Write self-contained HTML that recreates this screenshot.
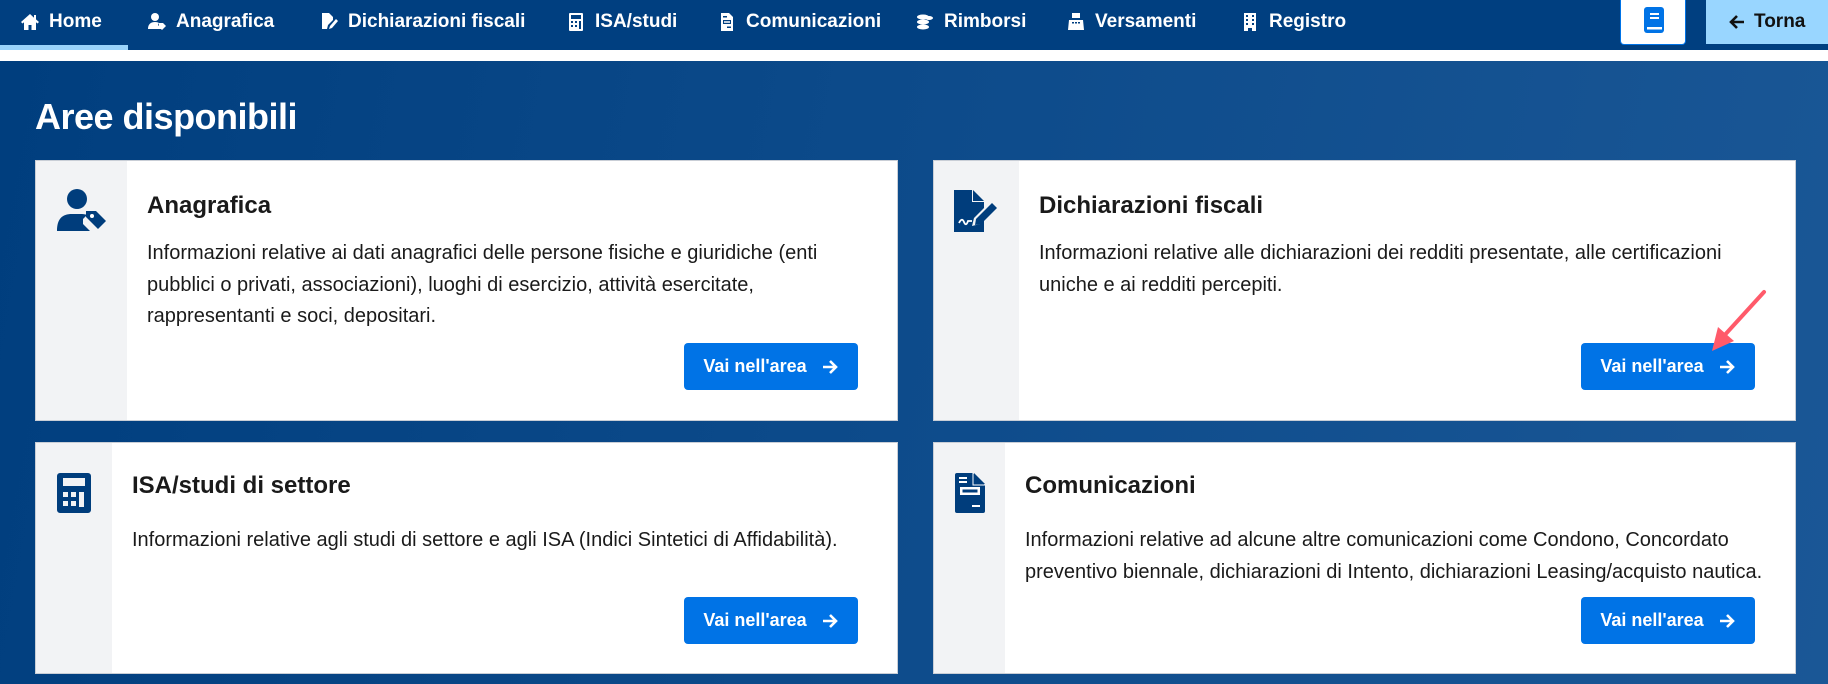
<!DOCTYPE html>
<html><head><meta charset="utf-8"><style>
*{margin:0;padding:0;box-sizing:border-box}
body{width:1828px;height:684px;overflow:hidden;font-family:"Liberation Sans",sans-serif;background:#fff;position:relative}
.nav{position:absolute;left:0;top:0;width:1828px;height:50px;background:#003f80}
.ni{position:absolute;top:11px;color:#fff;font-weight:bold;font-size:19px;white-space:nowrap;display:flex;align-items:center;gap:9px}
.ni svg{width:20px;height:20px;fill:#fff}
.ul{position:absolute;left:0;top:45px;width:128px;height:5px;background:#99d3fb}
.main{position:absolute;left:0;top:61px;width:1828px;height:623px;background:linear-gradient(100deg,#003e7e 0%,#0c4a8a 45%,#1a5796 100%)}
h1{position:absolute;left:35px;top:96px;color:#fff;font-size:36px;font-weight:bold;letter-spacing:-0.5px}
.card{position:absolute;background:#fff;border:1px solid #c9ced6}
.gc{position:absolute;left:0;top:0;bottom:0;background:#f2f3f5}
.card svg.ic{position:absolute;fill:#003d7c}
.t{position:absolute;font-size:24px;color:#1a1a1a;font-weight:bold}
.d{position:absolute;font-size:20px;line-height:31.5px;color:#1a1a1a;white-space:nowrap}
.btn{position:absolute;width:174px;height:47px;background:#0073e6;border-radius:4px;color:#fff;font-weight:bold;font-size:18px;display:flex;align-items:center;justify-content:center;gap:14px}
.btn svg{width:18px;height:18px}
</style></head><body>
<div class="nav">
<div class="ni" style="left:20px"><svg viewBox="0 0 20 20"><path d="M10 2L1 10l1.5 1.5L4 10.2V18h4.5v-5h3v5H16v-7.8l1.5 1.3L19 10l-3-2.6V3h-2v2.7z"/></svg>Home</div>
<div class="ni" style="left:147px"><svg viewBox="0 0 20 20"><circle cx="8" cy="5" r="4"/><path d="M1 17c0-5 3-7 7-7 2 0 3 .4 4 1l-1 2 4 4H1z"/><path d="M12 11h4l3 3-4 4-3-3z"/></svg>Anagrafica</div>
<div class="ni" style="left:319px"><svg viewBox="0 0 20 20"><path d="M3 1h7l4 4v3l-5 5-1 4H3z"/><path d="M11 14l6-7 2 2-6 7-3 1z"/></svg>Dichiarazioni fiscali</div>
<div class="ni" style="left:566px"><svg viewBox="0 0 20 20"><path d="M4 1h12a1 1 0 011 1v16a1 1 0 01-1 1H4a1 1 0 01-1-1V2a1 1 0 011-1zm1 2v4h10V3zm0 6v2h2V9zm4 0v2h2V9zm4 0v8h2V9zM5 13v2h2v-2zm4 0v2h2v-2z"/></svg>ISA/studi</div>
<div class="ni" style="left:717px"><svg viewBox="0 0 20 20"><path d="M4 1h8l4 4v14H4zm2 3v1.5h4V4zm0 4v4h8V8zm1 1.2h6v1.6H7zm3 5.3v1.5h4v-1.5z"/></svg>Comunicazioni</div>
<div class="ni" style="left:915px"><svg viewBox="0 0 20 20"><ellipse cx="8" cy="5" rx="6" ry="2.5"/><ellipse cx="8" cy="10" rx="6" ry="2.5"/><ellipse cx="8" cy="15" rx="6" ry="2.5"/><ellipse cx="14" cy="6" rx="4" ry="2"/></svg>Rimborsi</div>
<div class="ni" style="left:1066px"><svg viewBox="0 0 20 20"><path d="M6 1h8v5H6zM3 8h14l1 10H2zm3 2v1.5h2V10zm3 0v1.5h2V10zm3 0v1.5h2V10z"/></svg>Versamenti</div>
<div class="ni" style="left:1240px"><svg viewBox="0 0 20 20"><path d="M4 1h12v18h-4v-3H8v3H4zm2 2v2h2V3zm6 0v2h2V3zM6 7v2h2V7zm6 0v2h2V7zM6 11v2h2v-2zm6 0v2h2v-2z"/></svg>Registro</div>
<div style="position:absolute;left:1620px;top:0;width:66px;height:45px;background:#fff;border-radius:0 0 4px 4px;border:1px solid #0073e6;border-top:none"><svg viewBox="0 0 24 28" style="position:absolute;left:21px;top:6px;width:24px;height:28px"><rect x="2" y="1" width="20" height="26" rx="3" fill="#0073e6"/><rect x="8" y="7" width="9" height="2" fill="#fff"/><rect x="8" y="11" width="9" height="2" fill="#fff"/><rect x="5" y="21" width="15" height="2.5" fill="#fff"/></svg></div>
<div style="position:absolute;left:1706px;top:0;width:122px;height:44px;background:#99d6ff;color:#111;font-weight:bold;font-size:19px;display:flex;align-items:center;padding-left:22px;gap:8px"><svg viewBox="0 0 18 18" width="18" height="18"><path d="M16 9H3M9 3L3 9l6 6" stroke="#111" stroke-width="2.6" fill="none"/></svg>Torna</div>
<div class="ul"></div>
</div>
<div class="main"></div>
<h1>Aree disponibili</h1>

<div class="card" style="left:35px;top:160px;width:863px;height:261px">
<div class="gc" style="width:91px"></div>
<svg class="ic" viewBox="0 0 52 42" style="left:20px;top:28px;width:52px;height:42px"><circle cx="21" cy="10" r="10"/><path d="M1 42c0-12 5-17 15-17h10c2 0 4 .5 5 1l-4 4v5l7 7H1z"/><path d="M30 25h10l10 10-8 8-12-12z" transform="translate(0,-3)"/><circle cx="36" cy="27" r="2" fill="#fff"/></svg>
<div class="t" style="left:111px;top:31px">Anagrafica</div>
<div class="d" style="left:111px;top:77px">Informazioni relative ai dati anagrafici delle persone fisiche e giuridiche (enti<br>pubblici o privati, associazioni), luoghi di esercizio, attività esercitate,<br>rappresentanti e soci, depositari.</div>
<div class="btn" style="left:648px;top:182px">Vai nell'area <svg viewBox="0 0 18 18"><path d="M2 9h13M9 3l6 6-6 6" stroke="#fff" stroke-width="2.6" fill="none"/></svg></div>
</div>

<div class="card" style="left:933px;top:160px;width:863px;height:261px">
<div class="gc" style="width:85px"></div>
<svg class="ic" viewBox="0 0 46 42" style="left:20px;top:29px;width:46px;height:42px"><path d="M0 0h18v12h12v6L20 28l-2 8 8-2 4-4v12H0z"/><path d="M19 0l11 11H19z"/><path d="M22 29l16-16 5 5-16 16-6 1z"/><path d="M5 33q3-6 5-1t4-1h4" stroke="#fff" stroke-width="1.8" fill="none"/></svg>
<div class="t" style="left:105px;top:31px">Dichiarazioni fiscali</div>
<div class="d" style="left:105px;top:77px">Informazioni relative alle dichiarazioni dei redditi presentate, alle certificazioni<br>uniche e ai redditi percepiti.</div>
<div class="btn" style="left:647px;top:182px">Vai nell'area <svg viewBox="0 0 18 18"><path d="M2 9h13M9 3l6 6-6 6" stroke="#fff" stroke-width="2.6" fill="none"/></svg></div>
</div>

<div class="card" style="left:35px;top:442px;width:863px;height:232px">
<div class="gc" style="width:76px"></div>
<svg class="ic" viewBox="0 0 34 40" style="left:21px;top:30px;width:34px;height:40px"><path d="M3 0h28a3 3 0 013 3v34a3 3 0 01-3 3H3a3 3 0 01-3-3V3a3 3 0 013-3zm3 5v8h22V5zm0 14v5h5v-5zm8 0v5h5v-5zm8 0v15h5V19zM6 28v5h5v-5zm8 0v5h5v-5z"/></svg>
<div class="t" style="left:96px;top:29px">ISA/studi di settore</div>
<div class="d" style="left:96px;top:82px">Informazioni relative agli studi di settore e agli ISA (Indici Sintetici di Affidabilità).</div>
<div class="btn" style="left:648px;top:154px">Vai nell'area <svg viewBox="0 0 18 18"><path d="M2 9h13M9 3l6 6-6 6" stroke="#fff" stroke-width="2.6" fill="none"/></svg></div>
</div>

<div class="card" style="left:933px;top:442px;width:863px;height:232px">
<div class="gc" style="width:71px"></div>
<svg class="ic" viewBox="0 0 30 40" style="left:21px;top:30px;width:30px;height:40px"><path d="M2 0h16l12 12v26a2 2 0 01-2 2H2a2 2 0 01-2-2V2a2 2 0 012-2z"/><path d="M4 4h8v2H4zm0 4h8v2H4zm1 6h20v8H5zm2.5 2.5v3h15v-3zM17 32h8v2h-8z" fill="#fff"/><path d="M19 0v11h11z" fill="#003d7c"/><path d="M18 0v12h12" fill="none" stroke="#fff" stroke-width="1"/></svg>
<div class="t" style="left:91px;top:29px">Comunicazioni</div>
<div class="d" style="left:91px;top:82px">Informazioni relative ad alcune altre comunicazioni come Condono, Concordato<br>preventivo biennale, dichiarazioni di Intento, dichiarazioni Leasing/acquisto nautica.</div>
<div class="btn" style="left:647px;top:154px">Vai nell'area <svg viewBox="0 0 18 18"><path d="M2 9h13M9 3l6 6-6 6" stroke="#fff" stroke-width="2.6" fill="none"/></svg></div>
</div>

<svg style="position:absolute;left:0;top:0" width="1828" height="684"><line x1="1764" y1="292" x2="1722" y2="338" stroke="#ff5a6a" stroke-width="4" stroke-linecap="round"/><path d="M1712 351l6-24 16 14z" fill="#ff5a6a"/></svg>
</body></html>
